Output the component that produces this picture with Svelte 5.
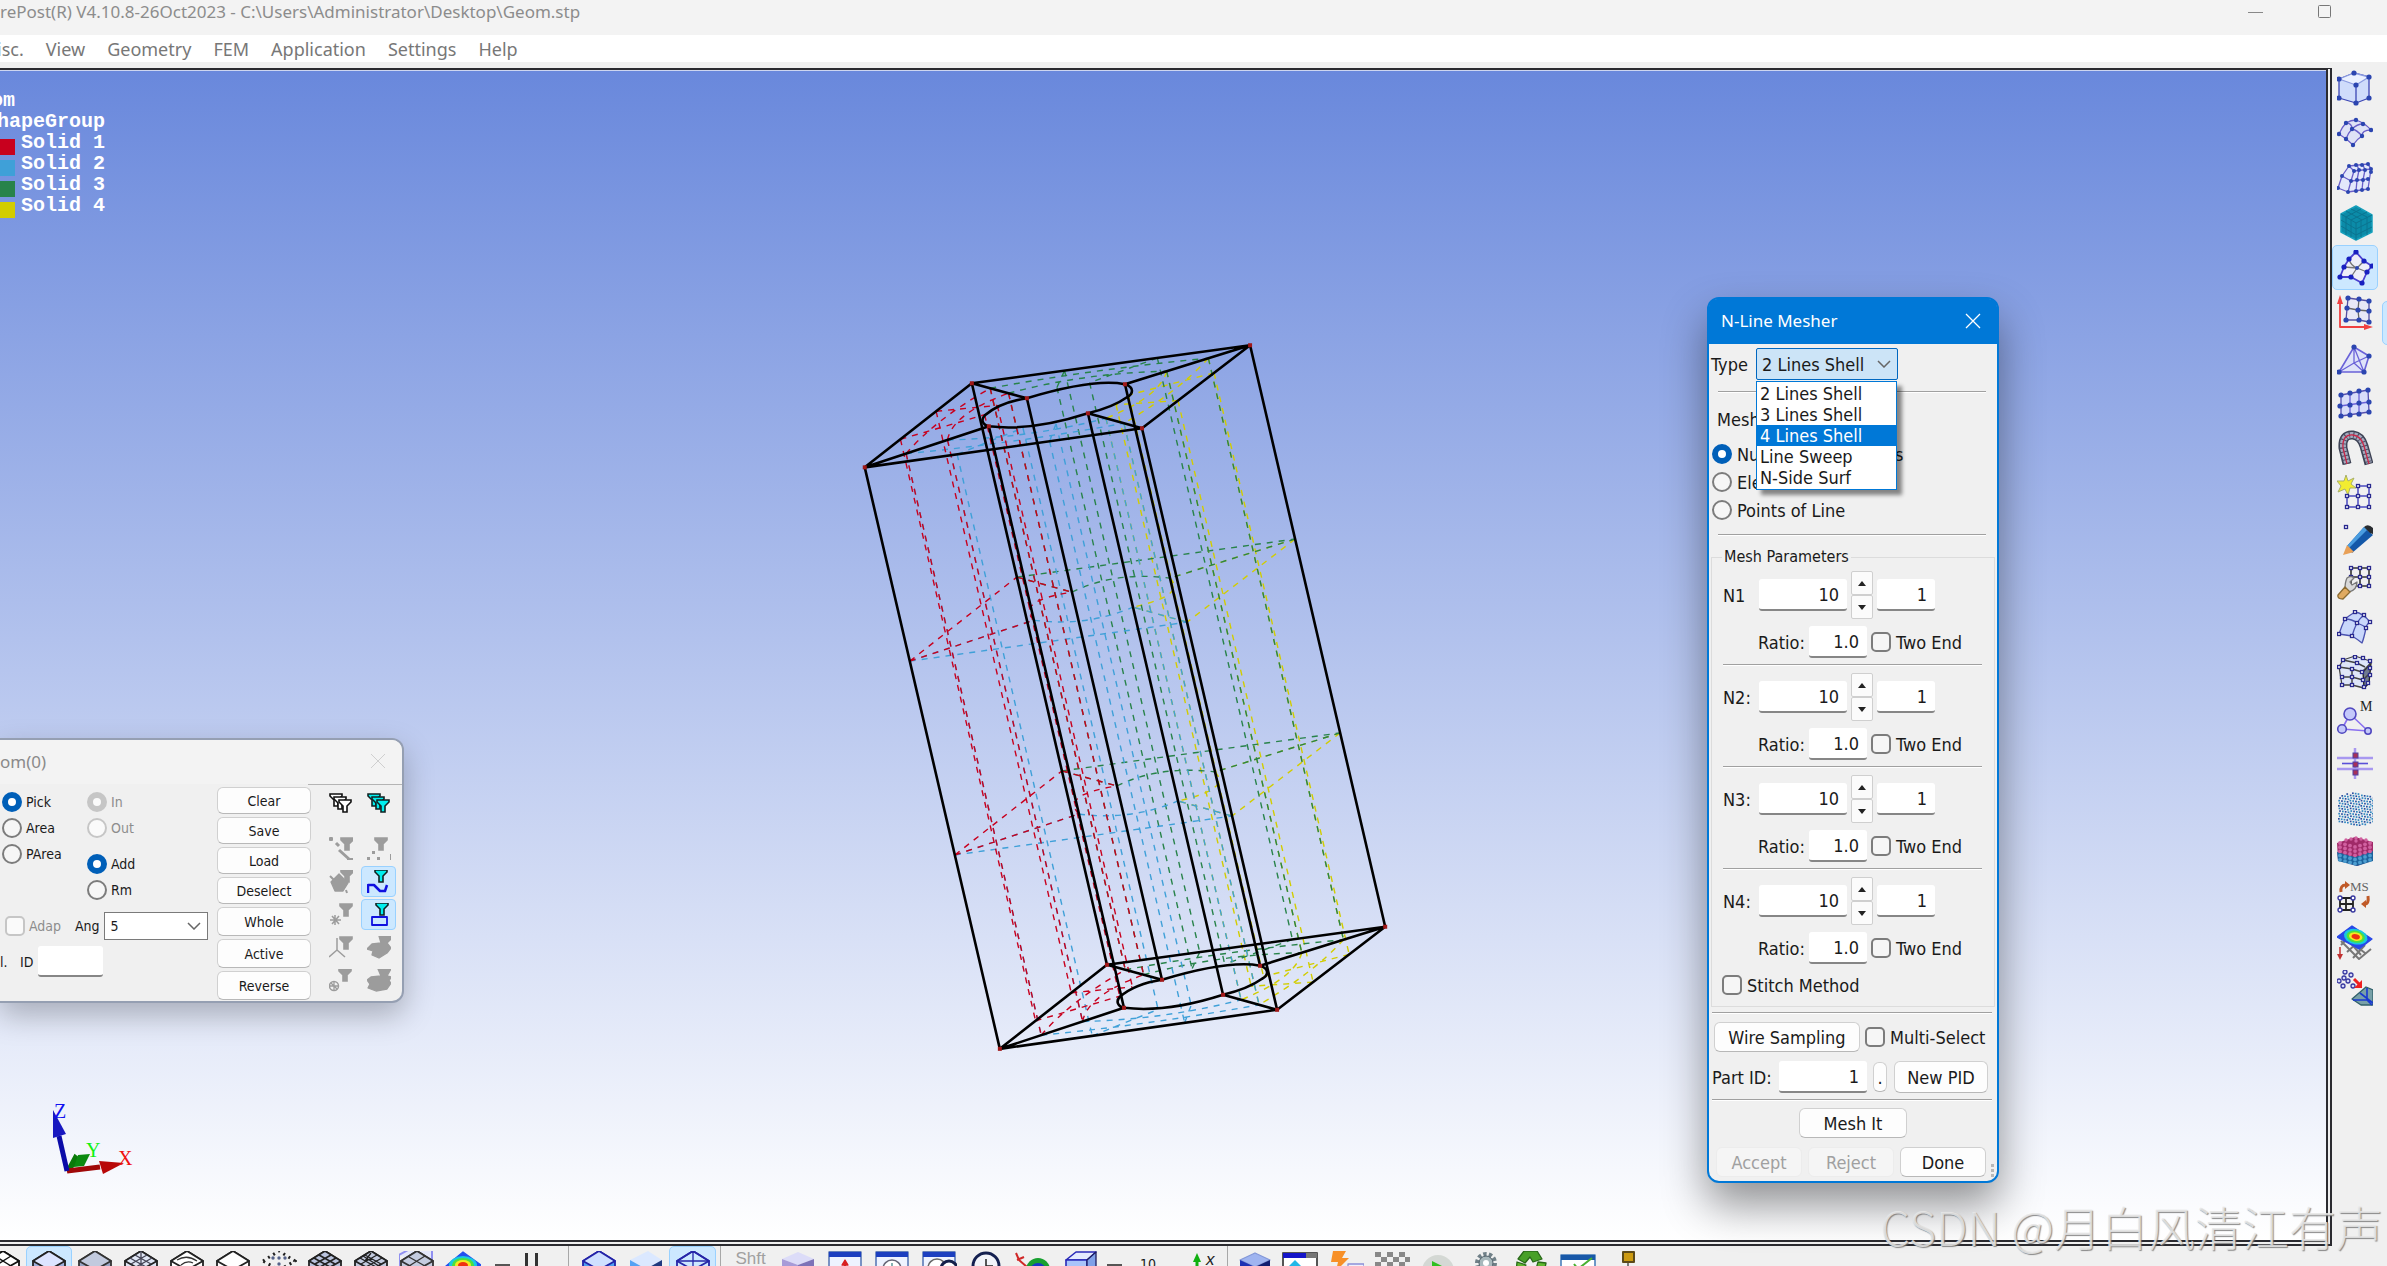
<script lang="ts">
/**
 * Pre/post processor main window
 *
 * Layout: title bar, menu bar, 3D viewport with a tool column on the right,
 * render toolbar along the bottom. Two tool dialogs float over the viewport.
 */

type Point = [number, number];

const menus = ['isc.', 'View', 'Geometry', 'FEM', 'Application', 'Settings', 'Help'];

const solids = [
	{ name: 'Solid 1', color: '#c8001e' },
	{ name: 'Solid 2', color: '#3fa0d8' },
	{ name: 'Solid 3', color: '#28834a' },
	{ name: 'Solid 4', color: '#d2cd00' }
];

const meshTypes = ['2 Lines Shell', '3 Lines Shell', '4 Lines Shell', 'Line Sweep', 'N-Side Surf'];
const highlightedType = '4 Lines Shell';
let meshType = $state('2 Lines Shell');
let meshBy = $state('number');
let pickMode = $state('Pick');
let editMode = $state('Add');

let lines = $state([
	{ label: 'N1', count: '10', step: '1', ratio: '1.0', twoEnd: false },
	{ label: 'N2:', count: '10', step: '1', ratio: '1.0', twoEnd: false },
	{ label: 'N3:', count: '10', step: '1', ratio: '1.0', twoEnd: false },
	{ label: 'N4:', count: '10', step: '1', ratio: '1.0', twoEnd: false }
]);

const selectionActions = ['Clear', 'Save', 'Load', 'Deselect', 'Whole', 'Active', 'Reverse'];

function stepLine(index: number, delta: number) {
	lines[index].count = String(Math.max(1, Number(lines[index].count) + delta));
}

/* ---------- wireframe model ---------- */

// Top face corners; the bottom face is the same shape moved by `drop`
const A: Point = [865, 468];
const B: Point = [972, 384];
const C: Point = [1250, 346];
const D: Point = [1142, 429];
const E: Point = [1027, 399];
const F: Point = [1125, 385];
const G: Point = [1088, 414];
const H: Point = [989, 427];
const drop: Point = [135, 581];
const corners = [A, B, C, D, E, F, G, H];

// Each solid: two outer corners, two inner corners, control point of the bore arc
const cells = [
	{ color: '#d2cd00', outer: [C, D], inner: [F, G], bend: [1142, 402] },
	{ color: '#28834a', outer: [B, C], inner: [E, F], bend: [1070, 378] },
	{ color: '#3fa0d8', outer: [A, D], inner: [H, G], bend: [1041, 434] },
	{ color: '#c8001e', outer: [A, B], inner: [H, E], bend: [970, 408] }
] as { color: string; outer: Point[]; inner: Point[]; bend: Point }[];

function mix(a: Point, b: Point, t: number): Point {
	return [a[0] + (b[0] - a[0]) * t, a[1] + (b[1] - a[1]) * t];
}

function arc(a: Point, bend: Point, b: Point, t: number): Point {
	return mix(mix(a, bend, t), mix(bend, b, t), t);
}

function shift(p: Point, t: number): Point {
	return [p[0] + drop[0] * t, p[1] + drop[1] * t];
}

function line(a: Point, b: Point) {
	return `M${a[0]} ${a[1]}L${b[0]} ${b[1]}`;
}

function isoLines(cell: (typeof cells)[0]) {
	const [o1, o2] = cell.outer;
	const [i1, i2] = cell.inner;
	let d = '';
	for (const t of [1 / 3, 2 / 3]) {
		const outer = mix(o1, o2, t);
		const inner = arc(i1, cell.bend, i2, t);
		const left = mix(o1, i1, t);
		const right = mix(o2, i2, t);
		for (const p of [outer, inner, left, right]) d += line(p, shift(p, 1));
		for (const level of [0, 1]) {
			d += line(shift(outer, level), shift(inner, level));
			const bend = shift(mix(mix(o1, o2, 0.5), cell.bend, t), level);
			const from = shift(left, level);
			const to = shift(right, level);
			d += `M${from[0]} ${from[1]}Q${bend[0]} ${bend[1]} ${to[0]} ${to[1]}`;
		}
		const [p1, p2, q1, q2, bend] = [o1, o2, i1, i2, cell.bend].map((p) => shift(p, t));
		d += line(p1, p2) + line(p1, q1) + line(p2, q2);
		d += `M${q1[0]} ${q1[1]}Q${bend[0]} ${bend[1]} ${q2[0]} ${q2[1]}`;
	}
	return d;
}

const edges = corners.map((p) => line(p, shift(p, 1))).join('');
const facePath =
	line(A, B) + line(B, C) + line(C, D) + line(D, A) + line(A, H) + line(B, E) + line(C, F) + line(D, G) +
	'M989 427C982 425 981 420 985 416Q1000 403 1027 399C1057 390 1100 380 1125 385C1135 388 1133 395 1127 398Q1113 408 1088 414C1057 424 1022 431 989 427';

/* ---------- toolbar icons, all on a 36 x 36 grid ---------- */

function pairs(text: string) {
	return text.split(' ').map((p) => p.split(',').map(Number) as Point);
}

function dots(text: string, r = 2.6, fill = '#2b45b0') {
	return pairs(text).map(([x, y]) => `<circle cx="${x}" cy="${y}" r="${r}" fill="${fill}"/>`).join('');
}

function boxes(text: string) {
	return pairs(text)
		.map(([x, y]) => `<rect x="${x - 1.5}" y="${y - 1.5}" width="3" height="3" fill="#fff" stroke="#29298f" stroke-width="1.3"/>`)
		.join('');
}

function path(d: string, stroke = '#6a5fc8', fill = 'none', width = 1.3) {
	return `<path d="${d}" stroke="${stroke}" fill="${fill}" stroke-width="${width}" stroke-linejoin="round"/>`;
}

// Even cloud of points that fills a cube outline
function cloud() {
	let out = '';
	for (let i = 0; i < 13; i++) {
		for (let j = 0; j < 13; j++) {
			const x = 1 + i * 2.8 + ((j * 7) % 5) * 0.3;
			const y = 2 + j * 2.6 + ((i * 5) % 4) * 0.4;
			if (Math.abs(x - 18) / 4 > y - 1 || Math.abs(x - 18) / 4 > 36 - y) continue;
			out += `<rect x="${x}" y="${y}" width="1.7" height="1.7" fill="${(i * 2 + j * 3) % 5 > 1 ? '#2f86c0' : '#2a4fa0'}"/>`;
		}
	}
	return out;
}

function stack() {
	let out = path('M0 8L18 2L36 7V25L20 31L1 25Z', 'none', '#a02a68');
	out += path('M0 17L18 22L36 16V26L20 31L1 26Z', 'none', '#1c639c');
	for (let j = 0; j < 5; j++) {
		for (let i = 0; i < 7; i++) {
			const x = 3 + i * 5;
			const y = 8 + j * 4.2 + (i < 4 ? i : 6 - i) * 1.3;
			out += `<circle cx="${x}" cy="${y}" r="1.9" fill="${j < 3 ? '#d060a0' : '#4d9ed0'}"/>`;
		}
	}
	return out + dots('9,5 14,4 19,3 24,4 29,5 19,6', 1.7, '#d060a0');
}

const contour =
	'<ellipse cx="18" cy="12" rx="14" ry="9" fill="#18c8e0"/><ellipse cx="18" cy="12" rx="11" ry="7" fill="#4be040"/><ellipse cx="18" cy="12" rx="8" ry="5" fill="#f5e820"/><ellipse cx="18" cy="12" rx="5" ry="3" fill="#f03010"/>';

const meshTools = [
	{ name: 'Cube', art: path('M17 3L32 7V28L19 33L2 28V9Z', '#3c46b4', '#cfdcfb') + path('M2 9L19 15L32 7L17 3Z', '#8b9be0', '#eaf0ff') + path('M19 15V33', '#3c46b4') + dots('17,3 2,9 32,7 19,15 2,28 19,33 32,28') },
	{ name: 'Surface', art: path('M19 5Q28 8 34 15Q25 15 25 21Q20 24 16 30Q10 24 2 19Q5 12 9 8Q14 5 19 5Z', '#6a5fc8', '#dfe2f6') + path('M9 8Q15 8 15 14Q20 15 25 21M26 9Q20 9 15 14Q11 18 9 24') + dots('19,5 26,9 34,15 9,8 15,14 25,21 2,19 9,24 16,30', 2.2) },
	{ name: 'Block mesh', art: path('M12 6L31 4L34 9L31 29L11 32L1 28L5 16Z', '#6a5fc8', '#e3e8fb') + path('M12 6L17 11L14 21L11 32M17 11L34 9M5 16L14 21L31 19M20 5L22 10L20 20L19 31M26 5L28 10L26 20L25 30M31 4L34 9') + dots('12,6 19,5 25,5 31,4 5,16 17,11 22,10 28,10 34,9 34,12 1,28 14,21 20,20 26,20 31,19 11,32 19,31 25,30 31,29', 2) },
	{ name: 'Solid mesh', art: path('M19 1L35 10V27L19 35L4 27V9Z', '#16a0bc', '#0b8ba8', 1.5) + path('M4 9L19 18L35 10M19 18V35M9 12V30M14 15V32M24 15V32M30 12V30M4 15L19 24L35 16M4 21L19 30L35 22M9 6L25 15M14 4L30 12M24 4L9 12M30 7L14 15', '#0a7490', 'none', 1) },
	{ name: 'N-line mesher', active: true, art: path('M19 2L12 9L7 17L3 27L14 27L25 33L30 22L35 16L27 11Z', '#4a3fd0', '#eeeef8', 1.8) + path('M12 9Q14 16 20 18L14 27M27 11L20 18L30 22M7 17L20 18', '#777') + dots('19,2 12,9 7,17 3,27 14,27 25,33 30,22 35,16 27,11', 2.6, '#1820c0') + dots('20,18', 2) },
	{ name: '2D mesh', art: path('M11 3L32 6V27L22 25L9 25Z', '#5550a0', '#e8e8f6') + path('M22 4L21 15L22 25M10 13L21 15L32 16', '#666') + dots('11,3 22,4 32,6 10,13 21,15 32,16 9,25 22,25 32,27', 2.6) + path('M3 4V32H32', '#f04040', 'none', 1.8) + path('M3 0L6 9H0ZM36 32L27 35V29Z', 'none', '#f04040') },
	{ name: 'Tetra mesh', art: path('M17 7L2 32H27L32 16Z', '#6a62d8', '#dfe3f9', 1.6) + path('M17 7V23M2 32L17 23L27 32M17 23L32 16M17 7L27 32', '#6a62d8') + dots('17,7 2,32 27,32 32,16') },
	{ name: 'Grid', art: path('M4 10L31 5L32 27L4 31Z', '#5550b0', '#d8ddfa') + path('M3 21L32 17M13 8V30M22 6V29', '#6a62d8') + dots('4,10 13,8 22,6 31,5 3,21 13,20 22,18 32,17 4,31 13,30 22,29 32,27') },
	{ name: 'Sweep', art: path('M10 34L6 18Q5 4 16 5Q24 6 27 16L32 34', '#3d4254', 'none', 9) + path('M10 33L6 18Q5 4 16 5Q24 6 27 16L32 33', '#a3a9bd', 'none', 6) + '<path d="M10 34L6 18Q5 4 16 5Q24 6 27 16L32 34" fill="none" stroke="#4a5064" stroke-width="7" stroke-dasharray="1 3"/>' + path('M10 34L6 18Q5 4 16 5Q24 6 27 16L32 34', '#c82848', 'none', 1.3) },
	{ name: 'Create node', art: path('M21 11H32V32H10V21H32M21 11V32', '#4a4ac0', 'none', 1.5) + path('M9 0L11 6L17 3L14 9L19 13L13 13L11 20L8 14L1 17L4 11L0 6L7 6Z', '#a8b068', '#f2ec30', 1) + boxes('21,11 32,11 10,21 21,21 32,21 10,32 21,32 32,32') },
	{ name: 'Edit', art: boxes('9,7') + path('M27 7L36 15L15 33L10 26Z', 'none', '#1458a8') + path('M27 7L30 10L12 28L10 26Z', 'none', '#4a9de0') + path('M27 7Q31 3 36 8V14L33 13Z', 'none', '#282c30') + path('M10 25L17 32L6 35Z', 'none', '#e8a058') },
	{ name: 'Repair', art: path('M14 3H32V21H14ZM23 3V21M14 12H32', '#333', 'none', 1.6) + boxes('14,3 23,3 32,3 14,12 23,12 32,12 23,21 32,21') + path('M8 24Q8 17 10 13Q14 10 17 13L13 17L15 20L20 17Q20 25 12 27Z', '#777', '#d8d8d8') + path('M8 22L13 27L6 34Q0 34 1 30Z', '#8a6a30', '#e0aa60') },
	{ name: 'Patch', art: path('M18 2Q26 3 33 12Q29 15 29 18Q27 28 25 33Q20 29 15 26L2 24Q5 15 8 9Q13 5 18 2Z', '#4a52b0', '#c9d7fb') + path('M8 9Q15 9 20 13Q26 15 29 18M27 5Q23 8 20 13Q17 19 15 26', '#4a52b0') + boxes('18,2 27,5 33,12 8,9 20,13 29,18 2,24 15,26') },
	{ name: 'Hex mesh', art: path('M6 5L18 1L33 6L32 28L27 33L15 30H5L2 12Z', '#444', '#dfe6f8') + path('M26 17L34 8L32 28L27 33Z', '#222', '#707a90') + path('M2 12L15 14L25 17L34 8M15 14V30M5 22H15L26 25L33 18M6 5L20 8L28 12', '#444', 'none', 1.5) + boxes('6,5 18,2 26,3 33,6 2,12 20,8 15,14 25,17 5,22 15,22 33,13 5,30 15,30 27,32 26,25 31,28 33,20') },
	{ name: 'Modify', art: path('M13 14L5 29L31 31Z', '#8a70f0', 'none', 1.6) + '<g fill="#c4c8fa" stroke="#5048c0" stroke-width="1.6"><circle cx="13" cy="14" r="6"/><circle cx="5" cy="29" r="4.3"/><circle cx="31" cy="31" r="3.2"/></g><text x="23" y="11" font-size="14" font-family="Liberation Serif, serif" fill="#222">M</text>' },
	{ name: 'Align', art: path('M18 3V34', '#a898f0', 'none', 2.5) + path('M0 13H36M0 24H36', '#a898f0', 'none', 2.5) + path('M5 18.500H31', '#5a50d8', 'none', 1.6) + '<g fill="#a83058" stroke="#5040a0"><rect x="16" y="8" width="5" height="5"/><rect x="16" y="17" width="5" height="5"/><rect x="16" y="25" width="5" height="5"/></g>' },
	{ name: 'Particles', art: cloud() },
	{ name: 'Layers', art: stack() },
	{ name: 'Morph', art: '<text x="13" y="11" font-size="13" font-family="Liberation Serif, serif" fill="#666">MS</text>' + path('M4 12Q3 5 9 5', '#c05a28', 'none', 3) + path('M8 1L13 5L8 9Z', 'none', '#c05a28') + path('M31 16Q32 24 28 24', '#c05a28', 'none', 3) + path('M29 20V28L24 24Z', 'none', '#c05a28') + path('M3 18H16V30H3ZM9 18V30M3 24H16', '#222', 'none', 1.8) + '<g fill="#fff" stroke="#3838a0" stroke-width="1.4"><circle cx="3" cy="18" r="2"/><circle cx="16" cy="18" r="2"/><circle cx="3" cy="30" r="2"/><circle cx="16" cy="30" r="2"/></g>' },
	{ name: 'Map result', art: path('M4 16L22 34L34 24M4 20L10 14L28 28M16 33L28 20M10 27L20 18M6 16H12L24 30', '#777', 'none', 2) + path('M15 1L35 14L22 24L0 12Z', '#2848e8', '#2848e8') + '<g transform="translate(3 2) rotate(12 18 12) scale(0.85)">' + contour + '</g>' + path('M3 22V31', '#c03030', 'none', 1.5) + path('M0 29H6L3 35Z', 'none', '#c03030') },
	{ name: 'Convert', art: '<g fill="#d4d8f8" stroke="#3838a0" stroke-width="1.3"><circle cx="8" cy="2" r="2"/><circle cx="14" cy="5" r="2"/><circle cx="7" cy="8" r="2"/><circle cx="2" cy="11" r="2"/><circle cx="11" cy="11" r="2"/><circle cx="6" cy="16" r="2"/><circle cx="16" cy="16" r="2"/></g>' + path('M17 9L23 15', '#f02020', 'none', 3) + path('M25 10V18H17Z', 'none', '#f02020') + path('M15 29L29 17L36 20V35H24Z', '#30606a', '#78a0a8') + path('M30 18V30H16M30 30L35 35M23 23L36 33', '#1838d0', 'none', 1.6) }
];

function cube(top: string, stroke: string, extra = '', side = top) {
	return path('M2 10L18 0L34 10V28L18 36L2 28Z', stroke, side, 1.8) + path('M2 10L18 0L34 10L18 19Z', stroke, top, 1.8) + extra;
}

function panel(extra: string) {
	return path('M2 1H34V34H2Z', '#3a5fa8', '#eef3ff') + path('M2 1H34V6H2Z', 'none', '#1c3fc0') + extra;
}

const viewTools = [
	{ name: 'Wire', art: cube('#fff', '#111', path('M10 5L26 15M26 5L10 15', '#111')) },
	{ name: 'Shaded', active: true, art: cube('#dce4ff', '#222', '', '#9fb0dc') },
	{ name: 'Flat', art: cube('#c2cade', '#333', '', '#98a4c4') },
	{ name: 'Mesh', art: cube('#dfe6f5', '#222', path('M7 7L23 16M12 4L28 13M29 7L13 16M24 4L8 13M18 0V19', '#445', 'none', 1.3)) },
	{ name: 'Hidden', art: cube('#fff', '#222', path('M8 9Q18 3 28 10M12 14Q18 9 24 12', '#333')) },
	{ name: 'Outline', art: cube('#fff', '#222') },
	{ name: 'Points', art: '<path d="M2 10L18 0L34 10L18 19Z" fill="none" stroke="#222" stroke-width="3" stroke-dasharray="2 4"/>' + dots('18,7 12,7 24,7 18,13', 1.7, '#55628a') },
	{ name: 'Shell', art: cube('#bac4de', '#222', path('M7 7L23 16M29 7L13 16M12 4L28 13M24 4L8 13', '#222', 'none', 1.6)) },
	{ name: 'Feature', art: cube('#c4cce0', '#222', path('M7 7L23 16M29 7L13 16M12 4L28 13M10 5L26 15M24 4L8 13M18 2L12 10', '#222')) },
	{ name: 'Box', art: path('M0 4V30M0 4L9 -1H33V16', '#9090f0', '#e4e8fa', 2) + cube('#c4cce0', '#333', path('M10 6L26 15M26 5L10 15', '#333')) },
	{ name: 'Fringe', art: path('M18 1L36 14L18 30L1 15Z', '#2050f0', '#2050f0') + '<g transform="translate(0 2)">' + contour + '</g>' }
];

const modelTools = [
	{ name: 'Solid view', art: cube('#cfe0ff', '#2323a8', '', '#4f9ff0') },
	{ name: 'Surface view', art: path('M2 9L20 0L34 9L18 18Z', 'none', '#dbe8ff') + path('M2 9L18 18V36L2 28Z', 'none', '#55a2f4') + path('M34 9L18 18V36L34 28Z', 'none', '#203a80') },
	{ name: 'Wire view', active: true, art: cube('none', '#2626a8', path('M18 0V19M2 10L34 10M10 14V30', '#2626a8')) }
];

const renderTools = [
	{ name: 'Transparent', art: path('M2 8L18 1L34 8L18 14Z', 'none', '#dcdcf8') + path('M2 8L18 14V36H2Z', 'none', '#a79bd8') + path('M34 8L18 14V36H34Z', 'none', '#7d73b8') },
	{ name: 'Center', art: panel(path('M18 9L15 14H21Z', '#d82020', '#d82020') + path('M18 12V24', '#d82020', 'none', 2)) },
	{ name: 'Zoom in', art: panel('<circle cx="18" cy="18" r="9" fill="#fff" stroke="#667" stroke-width="1.5"/>' + path('M18 12V24', '#488')) },
	{ name: 'Zoom out', art: panel('<circle cx="16" cy="17" r="9" fill="#fff" stroke="#666" stroke-width="1.5"/><circle cx="28" cy="18" r="8" fill="#fff" stroke="#14204a" stroke-width="3"/>') },
	{ name: 'Clock', art: '<circle cx="18" cy="15" r="13" fill="#f2f4fa" stroke="#142050" stroke-width="3"/>' + path('M18 8V15H25', '#222', 'none', 1.5) },
	{ name: 'Rotate', art: path('M1 2L4 9L12 16M2 9L9 6', '#d02828', 'none', 2) + '<circle cx="23" cy="19" r="12" fill="#18a030"/><circle cx="23" cy="20" r="8" fill="#1838c8"/>' },
	{ name: 'Perspective', art: path('M4 9L14 1H34L25 9Z', '#2828b8', '#e4eaff', 1.6) + path('M4 9H25V34H4Z', '#2828b8', '#a8c4fa', 1.6) + path('M25 9L34 1V28L25 34Z', '#1c1c60', '#7fa0e8') }
];

const appTools = [
	{ name: 'Part', art: path('M4 9L19 2L34 9L19 16Z', '#8498d8', '#9fb4f0') + path('M4 9L19 16V36H4Z', 'none', '#1d32b4') + path('M34 9L19 16V36L34 30Z', 'none', '#101d70') },
	{ name: 'Window', art: path('M1 2H35V36H1Z', '#555', '#fff', 2) + path('M1 2H35V7H1Z', 'none', '#1414c8') + path('M24 2H35V7H24Z', 'none', '#777') + path('M5 17L13 9L21 17Z', 'none', '#20b8e8') },
	{ name: 'Run', art: path('M5 0H18L14 7H21L8 20L10 11H3Z', 'none', '#f79028') + path('M20 13H36V30H20Z', '#8a90d8', '#f0f0fc') },
	{ name: 'Checker', art: path('M1 1H7V6H1ZM13 1H19V6H13ZM25 1H31V6H25ZM7 6H13V11H7ZM19 6H25V11H19ZM31 6H36V11H31ZM1 11H7V16H1ZM13 11H19V16H13ZM25 11H31V16H25Z', 'none', '#888') },
	{ name: 'Play', art: '<circle cx="18" cy="20" r="16" fill="#d4d8d4"/>' + path('M12 10L32 20L12 30Z', 'none', '#30c020') },
	{ name: 'Gears', art: '<circle cx="20" cy="12" r="8" fill="none" stroke="#708088" stroke-width="6" stroke-dasharray="3 2"/><circle cx="20" cy="12" r="7" fill="#a8b8bc" stroke="#50606a"/><circle cx="20" cy="12" r="3" fill="#fff"/>' },
	{ name: 'Recycle', art: path('M12 0H25L30 8L21 11L18 6L13 12L6 8Z', '#286818', '#48a028') + path('M5 11L14 14L10 20L4 22ZM26 11L34 12L32 22L24 18Z', '#286818', '#60b830') },
	{ name: 'Report', wide: true, art: path('M1 4H35V36H1Z', '#4078b8', '#fff', 1.5) + path('M1 4H35V9H1Z', 'none', '#1858a8') + path('M14 13L18 18L32 7', '#48b030', 'none', 2) },
	{ name: 'Tree', wide: true, art: path('M13 1H24V11H13Z', '#5c4a18', '#cc9a10', 2) + path('M18 12V30', '#555', 'none', 1.5) }
];

/* ---------- selection filter icons on a 24 x 24 grid ---------- */

const gray = '#9c9c9c';

function funnel(x: number, y: number, fill: string, stroke: string) {
	return `<path d="M${x} ${y}h12v2l-4 4v6h-4v-6l-4-4z" fill="${fill}" stroke="${stroke}" stroke-width="1.6"/>`;
}

const filters = [
	{ name: 'Filter set', art: funnel(1, 3, '#fff', '#111') + funnel(5, 6, '#fff', '#111') + funnel(10, 9, '#fff', '#111') },
	{ name: 'Active filter set', art: funnel(1, 3, '#0ee', '#122') + funnel(5, 6, '#0ee', '#122') + funnel(10, 9, '#0ee', '#122') },
	{ name: 'By node', art: funnel(12, 1, gray, gray) + path('M0 2L4 2M2 0V4M7 6L10 9M10 13L20 22', gray, 'none', 3) + path('M18 22H24', gray, 'none', 2) },
	{ name: 'By point', art: funnel(8, 1, gray, gray) + path('M0 20H3V23H0ZM5 14H8V17H5ZM10 20H13V23H10ZM23 17H24V23H23Z', 'none', gray) },
	{ name: 'By surface', art: funnel(12, 0, gray, gray) + path('M2 12L10 4L19 13L14 21H6Z', gray, gray) + path('M1 6L6 11M17 20L18 23', gray, 'none', 2) },
	{ name: 'By curve', active: true, art: funnel(8, 0, '#0ee', '#122') + path('M1 23V15H7L13 21H18L20 15', '#1010e0', 'none', 2.5) },
	{ name: 'By element', art: funnel(11, 1, gray, gray) + path('M6 12V22M1 17H12M3 13L10 21M10 13L3 21', gray, 'none', 1.5) },
	{ name: 'By face', active: true, art: funnel(9, 0, '#0ee', '#122') + path('M5 14H20V22H5Z', '#1010e0', 'none', 1.8) },
	{ name: 'By edge', art: funnel(11, 1, gray, gray) + path('M8 2V14L0 21M8 14L16 21', gray, 'none', 1.5) },
	{ name: 'By part', art: path('M12 0H24V3L20 7L24 12L20 17L12 22L5 19L6 15L0 13L5 8L14 7Z', gray, gray) },
	{ name: 'By set', art: funnel(10, 0, gray, gray) + '<circle cx="5" cy="17" r="4.500" fill="none" stroke="#9c9c9c" stroke-width="1.500"/>' + path('M5 13V22M0 17H10M2 14L8 20', gray, 'none', 1.3) },
	{ name: 'By solid', art: path('M11 0H24L20 7L24 8L22 12L24 14L20 20L9 22L1 19L3 15L0 11L4 8L14 7Z', gray, gray) }
];
</script>

{#snippet toolButton(tool: { name: string; art: string; active?: boolean; wide?: boolean })}
	<button type="button" class="tool" class:active={tool.active} class:wide={tool.wide} aria-label={tool.name}>
		<svg viewBox="0 0 36 36" width="36" height="36">{@html tool.art}</svg>
	</button>
{/snippet}

<div class="window">
	<header class="title-bar">
		<span>rePost(R) V4.10.8-26Oct2023 - C:\Users\Administrator\Desktop\Geom.stp</span>
		<div class="window-controls">
			<button type="button" aria-label="Minimize">
				<svg viewBox="0 0 16 16" width="16" height="16"><path d="M0 8.500H15" stroke="#888" /></svg>
			</button>
			<button type="button" aria-label="Maximize">
				<svg viewBox="0 0 16 16" width="16" height="16"><rect x="1.500" y="1.500" width="12" height="12" rx="1" fill="none" stroke="#777" /></svg>
			</button>
		</div>
	</header>

	<nav class="menu-bar">
		{#each menus as menu}
			<button type="button">{menu}</button>
		{/each}
	</nav>

	<div class="workspace">
		<main class="viewport">
			<svg class="model" viewBox="0 71 2326 1169" preserveAspectRatio="xMidYMid slice">
				<g class="iso">
					{#each cells as cell}
						<path d={isoLines(cell)} stroke={cell.color} />
					{/each}
				</g>
				<g class="edges">
					<path d={edges} />
					<path d={facePath} />
					<path d={facePath} transform="translate({drop[0]} {drop[1]})" />
				</g>
				{#each corners as corner}
					{#each [corner, shift(corner, 1)] as [x, y]}
						<rect x={x - 2} y={y - 2} width="4" height="4" fill="#a01818" />
					{/each}
				{/each}
			</svg>

			<div class="legend">
				<div class="root">om</div>
				<div class="group">hapeGroup</div>
				{#each solids as solid}
					<div class="entry">
						<i class="swatch" style="background: {solid.color}"></i>
						<span>{solid.name}</span>
					</div>
				{/each}
			</div>

			<svg class="triad" viewBox="40 1090 100 100" width="100" height="100">
				<path d="M67 1171L75 1156L80 1160Z" fill="#0a7a0a" stroke="#0a7a0a" stroke-width="3" />
				<path d="M78 1155L90 1154L84 1166L74 1167Z" fill="#0b8a10" />
				<path d="M67 1171L100 1167" stroke="#a00808" stroke-width="5" />
				<path d="M99 1161L124 1163L103 1174Z" fill="#b80808" />
				<path d="M59 1136L67 1171" stroke="#0b0ba8" stroke-width="5" />
				<path d="M53 1110L66 1134L53 1138Z" fill="#1818c0" />
				<text x="54" y="1118" fill="#1010f0">Z</text>
				<text x="86" y="1157" fill="#10f010">Y</text>
				<text x="118" y="1165" fill="#f01010">X</text>
			</svg>

			<section class="dialog selection" aria-label="Selection">
				<div class="selection-title">
					<span>om(0)</span>
					<button type="button" aria-label="Close selection">
						<svg viewBox="0 0 16 16" width="16" height="16"><path d="M1 1L15 15M15 1L1 15" stroke="#cfcfcf" /></svg>
					</button>
				</div>
				<div class="selection-body">
					<div class="selection-options">
						<div class="modes">
							<div class="mode-column">
								{#each ['Pick', 'Area', 'PArea'] as mode}
									<label class="choice"><input type="radio" value={mode} bind:group={pickMode} />{mode}</label>
								{/each}
							</div>
							<div class="mode-column">
								<label class="choice off"><input type="radio" class="chosen" name="side" checked disabled />In</label>
								<label class="choice off"><input type="radio" name="side" disabled />Out</label>
								<div class="edit-modes">
									{#each ['Add', 'Rm'] as mode}
										<label class="choice"><input type="radio" value={mode} bind:group={editMode} />{mode}</label>
									{/each}
								</div>
							</div>
						</div>
						<div class="angle-row">
							<label class="choice off"><input type="checkbox" disabled />Adap</label>
							<label for="angle">Ang</label>
							<select id="angle"><option>5</option></select>
						</div>
						<div class="id-row">
							<span>l.</span>
							<label for="entity-id">ID</label>
							<input id="entity-id" type="text" />
						</div>
					</div>
					<div class="actions">
						{#each selectionActions as action}
							<button type="button" class="push">{action}</button>
						{/each}
					</div>
					<div class="filters">
						{#each filters as filter}
							<button type="button" class:active={filter.active} aria-label={filter.name}>
								<svg viewBox="0 0 24 24" width="24" height="24">{@html filter.art}</svg>
							</button>
						{/each}
					</div>
				</div>
			</section>

			<section class="dialog mesher" aria-label="N-Line Mesher">
				<div class="mesher-title">
					<span>N-Line Mesher</span>
					<button type="button" aria-label="Close mesher">
						<svg viewBox="0 0 16 16" width="16" height="16"><path d="M1 1L15 15M15 1L1 15" stroke="#fff" stroke-width="1.300" /></svg>
					</button>
				</div>
				<div class="mesher-body">
					<div class="type-row">
						<label for="mesh-type">Type</label>
						<div class="combo">
							<select id="mesh-type" bind:value={meshType}>
								{#each meshTypes as type}
									<option>{type}</option>
								{/each}
							</select>
							<ul class="type-list">
								{#each meshTypes as type}
									<li class:highlighted={type === highlightedType}>{type}</li>
								{/each}
							</ul>
						</div>
					</div>
					<hr />
					<div class="mesh-by">Mesh by:</div>
					<label class="choice"><input type="radio" value="number" bind:group={meshBy} />Number of Elements</label>
					<label class="choice"><input type="radio" value="size" bind:group={meshBy} />Element Size</label>
					<label class="choice"><input type="radio" value="points" bind:group={meshBy} />Points of Line</label>
					<hr />
					<fieldset>
						<legend>Mesh Parameters</legend>
						{#each lines as row, i}
							{#if i > 0}
								<hr />
							{/if}
							<div class="line-row">
								<label for="count-{i}">{row.label}</label>
								<input id="count-{i}" class="count" type="text" bind:value={row.count} />
								<div class="spinner">
									<button type="button" aria-label="Increase" onclick={() => stepLine(i, 1)}><i class="up"></i></button>
									<button type="button" aria-label="Decrease" onclick={() => stepLine(i, -1)}><i class="down"></i></button>
								</div>
								<input class="step" type="text" aria-label="Line group" bind:value={row.step} />
							</div>
							<div class="ratio-row">
								<label for="ratio-{i}">Ratio:</label>
								<input id="ratio-{i}" class="step" type="text" bind:value={row.ratio} />
								<label class="choice"><input type="checkbox" bind:checked={row.twoEnd} />Two End</label>
							</div>
						{/each}
						<label class="choice stitch"><input type="checkbox" />Stitch Method</label>
					</fieldset>
					<hr class="full" />
					<div class="wire-row">
						<button type="button" class="push sampling">Wire Sampling</button>
						<label class="choice"><input type="checkbox" />Multi-Select</label>
					</div>
					<div class="part-row">
						<label for="part-id">Part ID:</label>
						<input id="part-id" class="count" type="text" value="1" />
						<button type="button" class="push dot">.</button>
						<button type="button" class="push new-pid">New PID</button>
					</div>
					<hr class="full" />
					<div class="mesh-row"><button type="button" class="push">Mesh It</button></div>
					<div class="finish-row">
						<button type="button" class="push" disabled>Accept</button>
						<button type="button" class="push" disabled>Reject</button>
						<button type="button" class="push">Done</button>
					</div>
				</div>
				<i class="grip"></i>
			</section>
		</main>

		<aside class="side-tools">
			{#each meshTools as tool}
				{@render toolButton(tool)}
			{/each}
			<i class="next-active"></i>
		</aside>
	</div>

	<footer class="bottom-tools">
		<div class="tool-group first">
			{#each viewTools as tool}
				{@render toolButton(tool)}
			{/each}
			<i class="dash"></i>
			<i class="pause"></i>
		</div>
		<div class="tool-group">
			{#each modelTools as tool}
				{@render toolButton(tool)}
			{/each}
		</div>
		<div class="tool-group render">
			<span class="shift">Shft</span>
			{#each renderTools as tool}
				{@render toolButton(tool)}
			{/each}
			<i class="dash"></i>
			<span class="increment">10</span>
			<button type="button" class="tool axis" aria-label="Rotate axis">
				<svg viewBox="0 0 36 36" width="36" height="36">
					<path d="M9 10V30" stroke="#10b010" stroke-width="3" />
					<path d="M9 2L13 11H5Z" fill="#10b010" />
					<text x="18" y="14" font-size="17" font-style="italic" font-family="Liberation Sans, sans-serif" fill="#222">x</text>
				</svg>
			</button>
		</div>
		<div class="tool-group apps">
			{#each appTools as tool}
				{@render toolButton(tool)}
			{/each}
		</div>
	</footer>

	<div class="watermark">CSDN @月白风清江有声</div>
</div>

<style>
	:global(body) {
		margin: 0;
		overflow: hidden;
	}

	.window,
	.window :global(*) {
		box-sizing: border-box;
	}

	.window {
		position: relative;
		display: flex;
		flex-direction: column;
		height: 100vh;
		overflow: hidden;
		background: #f0f0f0;
		color: #1a1a1a;
		font-family: 'DejaVu Sans Condensed', 'DejaVu Sans', sans-serif;
		font-size: 18px;
	}

	button,
	input,
	select {
		margin: 0;
		padding: 0;
		border: 0;
		border-radius: 0;
		background: none;
		color: inherit;
		font: inherit;
	}

	svg {
		display: block;
		flex: none;
	}

	/* Title and menu */
	.title-bar {
		display: flex;
		align-items: flex-start;
		justify-content: space-between;
		height: 35px;
		background: #f3f3f3;
		color: #8c8c8c;
		font-family: 'Noto Sans', sans-serif;
		font-size: 17px;
		line-height: 24px;
	}

	.window-controls {
		display: flex;
		gap: 53px;
		padding: 4px 54px 0 0;
	}

	.menu-bar {
		display: flex;
		align-items: center;
		gap: 22px;
		height: 27px;
		margin-bottom: 6px;
		background: #fff;
		color: #777;
		font-family: 'Noto Sans', sans-serif;
		font-size: 18px;
	}

	.menu-bar button:first-child {
		margin-left: -3px;
	}

	.workspace {
		display: flex;
		flex: 1;
		min-height: 0;
	}

	/* Viewport */
	.viewport {
		position: relative;
		flex: 1;
		border-right: 6px double #2b2b30;
		border-bottom: 6px double #2b2b30;
		border-top: 2px solid #2b2b30;
		box-shadow: inset 0 1px #cdd6f0;
		background: linear-gradient(#6988dc, #fff) padding-box;
	}

	.model {
		position: absolute;
		inset: 0;
		width: 100%;
		height: 100%;
	}

	.iso path {
		fill: none;
		stroke-width: 1.4;
		stroke-dasharray: 6 6;
	}

	.edges path {
		fill: none;
		stroke: #000;
		stroke-width: 2.6;
	}

	.legend {
		position: relative;
		padding-top: 20px;
		color: #fff;
		font-family: 'Liberation Mono', monospace;
		font-size: 20px;
		font-weight: bold;
		line-height: 21px;
	}

	.root {
		margin-left: -9px;
	}

	.group {
		margin-left: -3px;
	}

	.entry {
		display: flex;
		gap: 6px;
		height: 21px;
	}

	.swatch {
		width: 15px;
		height: 16px;
		margin-top: 7px;
	}

	.triad {
		position: absolute;
		left: 40px;
		bottom: 50px;
		font-family: 'Liberation Serif', serif;
		font-size: 20px;
	}

	/* Shared dialog controls */
	.dialog {
		position: absolute;
		background: #f0f0f0;
	}

	.choice {
		display: flex;
		align-items: center;
		gap: 5px;
		white-space: nowrap;
	}

	input[type='radio'],
	input[type='checkbox'] {
		appearance: none;
		flex: none;
		width: 20px;
		height: 20px;
		border: 2px solid #7c7c7c;
		border-radius: 5px;
		background: #f6f6f6;
	}

	input[type='radio'] {
		border-radius: 50%;
	}

	input[type='radio']:checked {
		border: 6px solid #005fb8;
		background: #fff;
	}

	input[type='radio']:disabled,
	input[type='checkbox']:disabled {
		border-color: #c6c6c6;
		background: #fafafa;
	}

	.off {
		color: #8d8d8d;
	}

	input[type='text'] {
		border-bottom: 2px solid #868686;
		border-radius: 3px;
		background: #fff;
	}

	.push {
		border: 1px solid #d0d0d0;
		border-bottom-color: #b8b8b8;
		border-radius: 6px;
		background: #fdfdfd;
	}

	.push:disabled {
		border-color: #ececec;
		background: #f5f5f5;
		color: #a0a0a0;
	}

	select {
		appearance: none;
		background: #fff url("data:image/svg+xml,%3Csvg xmlns='http://www.w3.org/2000/svg' width='14' height='8'%3E%3Cpath d='M1 1l6 6 6-6' fill='none' stroke='%23666' stroke-width='1.500'/%3E%3C/svg%3E") no-repeat right 6px center;
	}

	hr {
		height: 2px;
		margin: 0 9px 0 7px;
		border: 0;
		border-top: 1px solid #a0a0a0;
		background: #fff;
	}

	hr.full {
		margin: 0 3px 0 1px;
	}

	/* Selection dialog */
	.selection {
		left: 0;
		top: 668px;
		width: 404px;
		height: 265px;
		border: 2px solid #959fb2;
		border-left: 0;
		border-radius: 0 12px 12px 0;
		box-shadow: 0 12px 30px rgba(0, 0, 0, 0.25);
		font-size: 14px;
	}

	.selection-title {
		display: flex;
		align-items: center;
		justify-content: space-between;
		height: 44px;
		padding: 0 16px 2px 0;
		border-radius: 0 10px 0 0;
		background: #f3f3f3;
		color: #8a8a8a;
		font-family: 'Noto Sans', sans-serif;
		font-size: 17px;
	}

	.selection-body {
		display: flex;
	}

	.selection-options {
		width: 217px;
		padding-top: 5px;
	}

	.modes {
		display: flex;
	}

	.mode-column {
		width: 85px;
		padding-left: 2px;
	}

	.modes .choice {
		height: 26px;
		gap: 4px;
	}

	.edit-modes {
		margin-top: 10px;
	}

	.angle-row {
		display: flex;
		align-items: center;
		gap: 4px;
		margin-top: 9px;
		padding-left: 5px;
	}

	.angle-row .choice {
		gap: 4px;
		width: 66px;
	}

	#angle {
		width: 104px;
		height: 28px;
		padding-left: 6px;
		border: 1px solid #7a7a7a;
	}

	.id-row {
		display: flex;
		align-items: center;
		height: 31px;
		margin-top: 6px;
	}

	.id-row span {
		width: 20px;
	}

	#entity-id {
		width: 65px;
		height: 31px;
		margin-left: 5px;
	}

	.actions {
		display: flex;
		flex-direction: column;
		gap: 3px;
		width: 94px;
		padding-top: 3px;
	}

	.actions .push {
		height: 27px;
	}

	.actions .push:nth-child(n + 5) {
		height: 29px;
	}

	.filters {
		display: grid;
		flex: 1;
		grid-template-columns: 38px 38px;
		grid-template-rows: 46px repeat(5, 33px);
		padding: 1px 0 0 14px;
		margin-left: -3px;
		border-top: 1px solid #b4b4b4;
	}

	.filters button {
		display: grid;
		place-items: center;
		width: 35px;
		height: 31px;
		margin: 1px;
		border: 1px solid transparent;
		border-radius: 4px;
	}

	.filters button.active {
		border-color: #99d1ff;
		background: #cce8ff;
	}

	/* Mesher dialog */
	.mesher {
		left: 1707px;
		top: 227px;
		width: 292px;
		border: 2px solid #0078d7;
		border-radius: 12px;
		box-shadow: 0 22px 44px rgba(0, 0, 0, 0.42);
	}

	.mesher-title {
		display: flex;
		align-items: center;
		justify-content: space-between;
		height: 45px;
		padding: 0 16px 2px 12px;
		border-radius: 8px 8px 0 0;
		background: #0078d7;
		color: #fff;
		font-family: 'Noto Sans', sans-serif;
		font-size: 17px;
	}

	.mesher-body {
		padding: 4px 2px 4px;
	}

	.mesher-body > .choice {
		height: 28px;
		padding-left: 1px;
	}

	.type-row {
		display: flex;
		align-items: center;
		margin-bottom: 11px;
	}

	.type-row > label {
		width: 45px;
	}

	.combo {
		position: relative;
	}

	#mesh-type {
		display: block;
		width: 142px;
		height: 32px;
		padding-left: 5px;
		border: 1px solid #0067c0;
		border-radius: 2px;
		background-color: #cce4f7;
	}

	.type-list {
		position: absolute;
		z-index: 2;
		top: 33px;
		left: 0;
		width: 141px;
		margin: 0;
		padding: 1px 0;
		border: 1px solid #0078d7;
		background: #fff;
		box-shadow: 5px 5px 4px rgba(0, 0, 0, 0.45);
		line-height: 21px;
		list-style: none;
	}

	.type-list li {
		padding-left: 3px;
	}

	.type-list .highlighted {
		background: #0078d7;
		color: #fff;
	}

	.mesh-by {
		margin: 16px 0 9px 6px;
		line-height: 22px;
	}

	.mesher-body > .choice + hr {
		margin-top: 10px;
	}

	fieldset {
		min-width: 0;
		margin: 10px 0 5px;
		padding: 3px 10px 10px;
		border: 1px solid #dcdcdc;
	}

	legend {
		padding: 0 2px;
		font-size: 16px;
		line-height: 22px;
	}

	fieldset hr {
		margin: 6px 2px 7px 1px;
	}

	.line-row {
		display: flex;
		align-items: center;
		height: 48px;
	}

	.line-row > label {
		width: 37px;
		padding-left: 1px;
	}

	.count,
	.step {
		width: 88px;
		height: 32px;
		padding-right: 8px;
		text-align: right;
	}

	.step {
		width: 58px;
	}

	.spinner {
		display: flex;
		flex-direction: column;
		width: 22px;
		height: 48px;
		margin: 0 4px;
	}

	.spinner button {
		display: grid;
		flex: 1;
		place-items: center;
		border: 1px solid #cfcfcf;
		border-radius: 2px;
		background: #fbfbfb;
	}

	.up,
	.down {
		border: 4px solid transparent;
		border-top-width: 0;
		border-bottom: 5px solid #222;
	}

	.down {
		border-top: 5px solid #222;
		border-bottom-width: 0;
	}

	.ratio-row {
		display: flex;
		align-items: center;
		height: 32px;
		margin-top: 7px;
	}

	.ratio-row > label:first-child {
		width: 51px;
		margin-left: 36px;
	}

	.ratio-row .choice {
		margin-left: 4px;
	}

	.stitch {
		height: 22px;
		margin-top: 10px;
	}

	.wire-row,
	.part-row {
		display: flex;
		align-items: center;
	}

	.wire-row {
		margin: 8px 0 9px 3px;
	}

	.wire-row .push {
		width: 146px;
		height: 30px;
		margin-right: 5px;
	}

	.part-row {
		margin-bottom: 6px;
		padding-left: 1px;
	}

	.part-row label {
		width: 67px;
	}

	.dot {
		width: 14px;
		height: 30px;
		margin: 0 7px 0 6px;
	}

	.new-pid {
		width: 94px;
		height: 32px;
	}

	.mesh-row {
		display: flex;
		justify-content: center;
		margin: 7px 0 9px;
	}

	.mesh-row .push {
		width: 108px;
		height: 30px;
	}

	.finish-row {
		display: flex;
		gap: 6px;
		padding-left: 5px;
	}

	.finish-row .push {
		width: 86px;
		height: 30px;
	}

	.grip {
		position: absolute;
		right: 3px;
		bottom: 4px;
		width: 3px;
		height: 13px;
		background: repeating-linear-gradient(#b8b8b8 0 3px, transparent 3px 5px);
	}

	/* Toolbars */
	.side-tools {
		position: relative;
		width: 55px;
		margin-top: -3px;
		overflow: hidden;
	}

	.tool {
		display: grid;
		flex: none;
		place-items: center;
		width: 46px;
		height: 45px;
		border: 1px solid transparent;
		border-radius: 5px;
	}

	.tool.active {
		border-color: #99d1ff;
		background: #cce8ff;
	}

	.next-active {
		position: absolute;
		top: 236px;
		left: 50px;
		width: 46px;
		height: 44px;
		border: 1px solid #99d1ff;
		border-radius: 5px;
		background: #cce8ff;
	}

	.bottom-tools {
		display: flex;
		height: 20px;
		overflow: hidden;
	}

	.tool-group {
		display: flex;
		height: 46px;
		padding: 0 4px 0 6px;
		border-left: 1px solid #a8a8a8;
	}

	.tool-group.first {
		padding: 0 26px 0 0;
		margin-left: -20px;
		border-left: 0;
	}

	.bottom-tools .tool {
		height: 46px;
	}

	.tool-group .tool {
		width: 47px;
	}

	.first .tool,
	.apps .tool {
		width: 46px;
	}

	.tool-group.apps {
		padding-left: 3px;
	}

	.apps .tool.wide {
		width: 50px;
	}

	.dash {
		width: 15px;
		height: 2px;
		margin: 18px 10px 0 9px;
		background: #555;
	}

	.render .dash {
		margin: 18px 3px 0 4px;
	}

	.pause {
		width: 13px;
		height: 30px;
		margin: 7px 4px 0 5px;
		border: 3px solid #333;
		border-width: 0 3px;
	}

	.shift {
		width: 47px;
		padding-top: 2px;
		color: #a0a0a0;
		font-family: 'Liberation Sans', sans-serif;
		font-size: 17px;
		line-height: 22px;
		text-align: center;
	}

	.increment {
		width: 46px;
		padding-top: 7px;
		font-size: 14px;
		line-height: 22px;
		text-align: center;
	}

	.tool-group .axis {
		width: 36px;
		margin-left: 16px;
	}

	.watermark {
		position: absolute;
		right: 4px;
		bottom: 6px;
		color: rgba(232, 232, 232, 0.85);
		font-family: 'Noto Sans CJK SC', sans-serif;
		font-size: 47px;
		font-weight: 300;
		line-height: 68px;
		text-shadow: 1px 1px 1px rgba(110, 110, 110, 0.8);
		pointer-events: none;
	}
</style>
